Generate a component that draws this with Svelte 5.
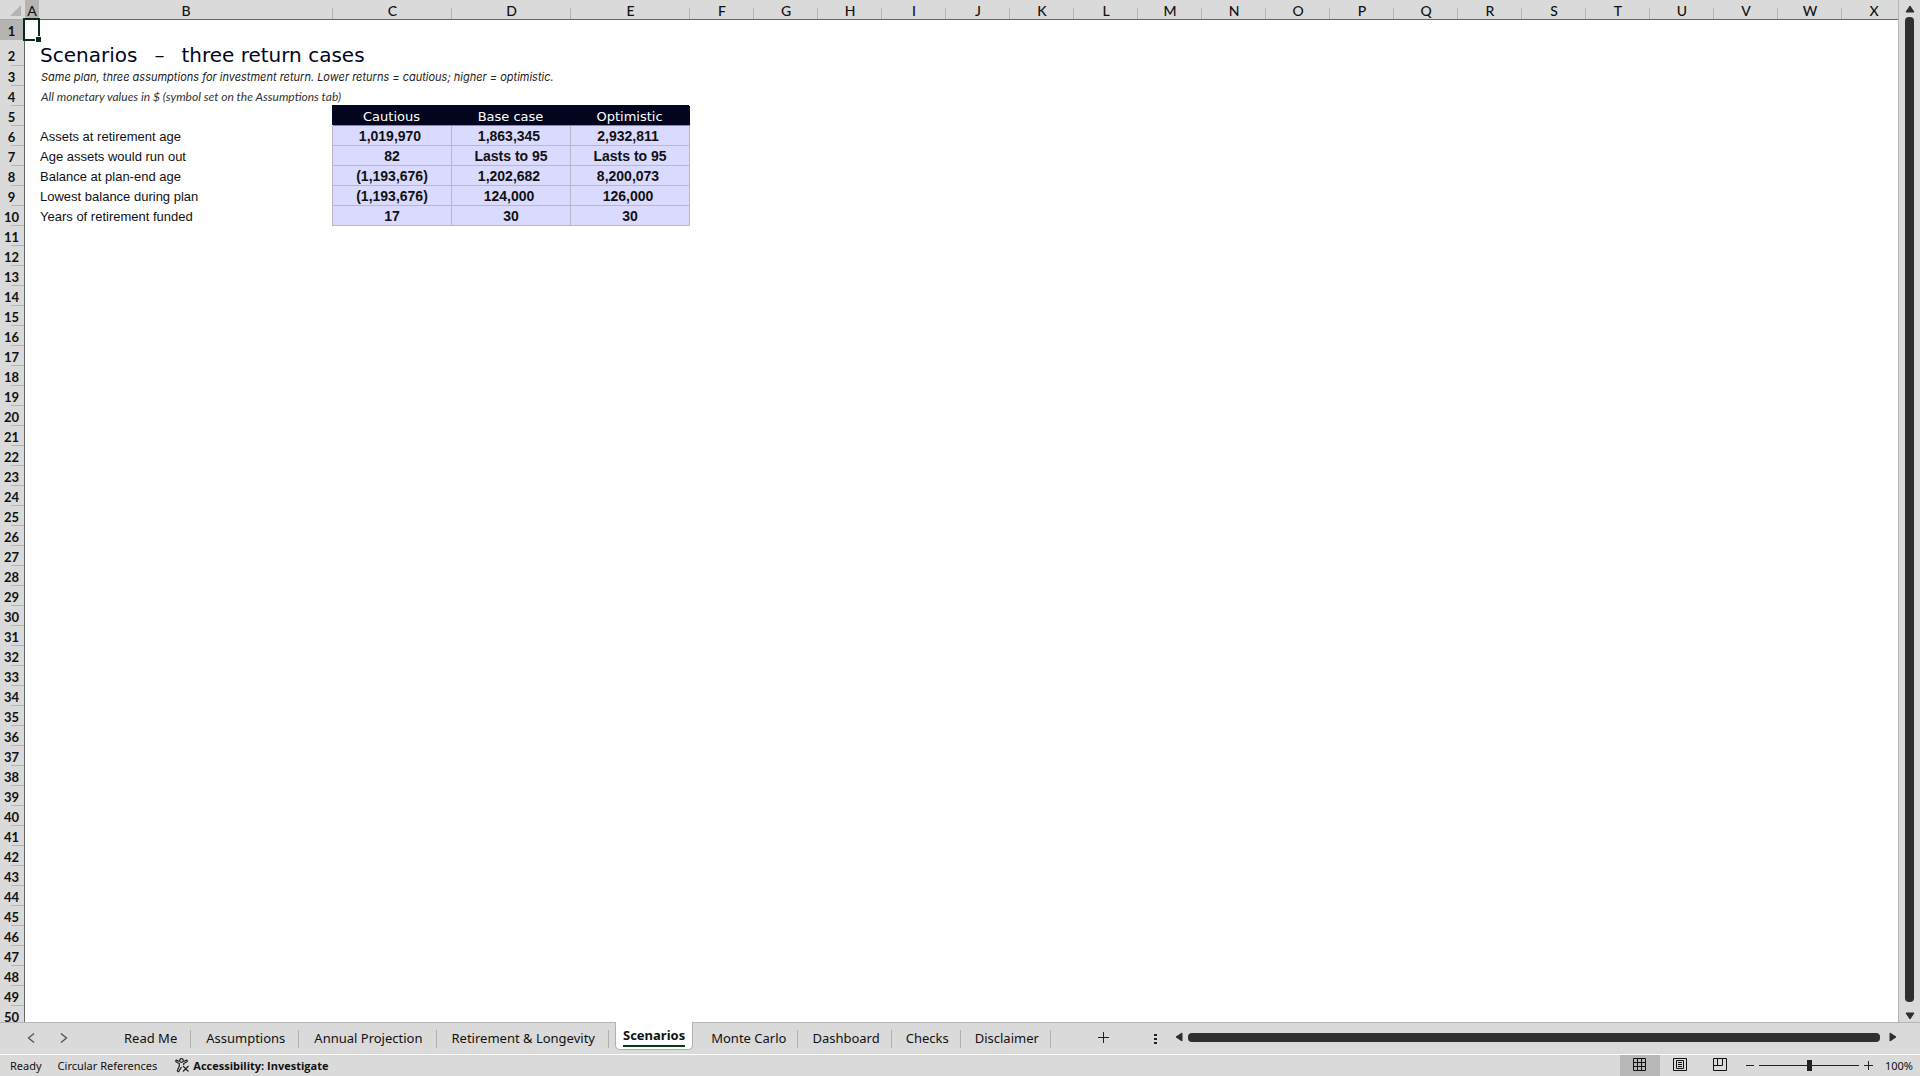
<script>
  const columns = 'ABCDEFGHIJKLMNOPQRSTUVWX'.split('');
  const rest = Array.from({ length: 40 }, (_, i) => i + 11);
  const scenarios = ['Cautious', 'Base case', 'Optimistic'];
  const results = [
    { label: 'Assets at retirement age', values: ['1,019,970', '1,863,345', '2,932,811'] },
    { label: 'Age assets would run out', values: ['82', 'Lasts to 95', 'Lasts to 95'] },
    { label: 'Balance at plan-end age', values: ['(1,193,676)', '1,202,682', '8,200,073'] },
    { label: 'Lowest balance during plan', values: ['(1,193,676)', '124,000', '126,000'] },
    { label: 'Years of retirement funded', values: ['17', '30', '30'] }
  ];
  const tabs = ['Read Me', 'Assumptions', 'Annual Projection', 'Retirement & Longevity', 'Scenarios', 'Monte Carlo', 'Dashboard', 'Checks', 'Disclaimer'];
  let active = $state('Scenarios');
  let zoom = $state(100);
  // Positive amounts keep room for a closing bracket on their right.
  const isAmount = (v) => v.includes(',') && !v.startsWith('(');
</script>

<div class="app">
  <div class="work">
    <div class="sheet">
      <table>
        <colgroup>
          <col class="w-head" /><col class="w-a" /><col class="w-b" />
          <col class="w-c" /><col class="w-c" /><col class="w-c" />
          {#each columns.slice(5) as c (c)}<col class="w-std" />{/each}
        </colgroup>
        <thead>
          <tr>
            <td class="corner"><svg width="24" height="19" aria-hidden="true"><path d="M21 5v11H10z" fill="#b4b4b4" /></svg></td>
            {#each columns as c (c)}<th scope="col" class:picked={c === 'A'}>{c}</th>{/each}
          </tr>
        </thead>
        <tbody>
          <tr><th scope="row" class="picked">1</th><td class="cursor"><span class="box"></span></td></tr>
          <tr class="tall"><th scope="row">2</th><td></td><td class="title">Scenarios<span class="dash">–</span>three return cases</td></tr>
          <tr><th scope="row">3</th><td></td><td class="note">Same plan, three assumptions for investment return. Lower returns = cautious; higher = optimistic.</td></tr>
          <tr><th scope="row">4</th><td></td><td class="note money">All monetary values in $ (symbol set on the Assumptions tab)</td></tr>
          <tr><th scope="row">5</th><td></td><td></td>{#each scenarios as s (s)}<td class="case">{s}</td>{/each}</tr>
          {#each results as r, i (r.label)}
            <tr>
              <th scope="row">{i + 6}</th><td></td><td class="label">{r.label}</td>
              {#each r.values as v, j (j)}<td class="value" class:amount={isAmount(v)}>{v}</td>{/each}
            </tr>
          {/each}
          {#each rest as n (n)}<tr><th scope="row">{n}</th><td></td></tr>{/each}
        </tbody>
      </table>
    </div>
    <div class="vbar">
      <button aria-label="Scroll up"><svg width="10" height="8"><path d="M5 1L9 7H1z" fill="#2f2f2f" stroke="#2f2f2f" stroke-linejoin="round" /></svg></button>
      <div class="thumb"></div>
      <button aria-label="Scroll down"><svg width="10" height="8"><path d="M5 7L9 1H1z" fill="#2f2f2f" stroke="#2f2f2f" stroke-linejoin="round" /></svg></button>
    </div>
  </div>

  <div class="tabbar">
    <div class="arrows">
      <button aria-label="Previous sheet"><svg width="8" height="10"><path d="M7 0.500L1.500 5L7 9.500" fill="none" stroke="#505050" stroke-width="1.300" /></svg></button>
      <button aria-label="Next sheet"><svg width="8" height="10"><path d="M1 0.500L6.500 5L1 9.500" fill="none" stroke="#505050" stroke-width="1.300" /></svg></button>
    </div>
    <nav class="tabs" aria-label="Sheets">
      {#each tabs as t (t)}
        <button class="tab" class:active={t === active} onclick={() => (active = t)}><span>{t}</span></button>
      {/each}
    </nav>
    <button class="add" aria-label="New sheet"><svg width="12" height="12"><path d="M5.500 0v11M0 5.500h11" stroke="#222" /></svg></button>
    <div class="grip"><svg width="4" height="12"><path d="M0 1h3M0 5h3M0 9h3" stroke="#222" stroke-width="2" /></svg></div>
    <div class="hbar">
      <button aria-label="Scroll left"><svg width="8" height="10"><path d="M1 5L7 1v8z" fill="#2f2f2f" stroke="#2f2f2f" stroke-linejoin="round" /></svg></button>
      <div class="thumb"></div>
      <button aria-label="Scroll right"><svg width="8" height="10"><path d="M7 5L1 1v8z" fill="#2f2f2f" stroke="#2f2f2f" stroke-linejoin="round" /></svg></button>
    </div>
  </div>

  <footer class="status">
    <span class="ready">Ready</span>
    <span class="circ">Circular References</span>
    <button class="access">
      <svg width="15" height="15" viewBox="0 0 15 15" fill="none" stroke="#222" stroke-width="1.200"><circle cx="6.500" cy="2.500" r="1.800" /><path d="M4.500 3.500L1.500 2.200Q0.300 2.500 1 3.700L4.300 5.500V8L2.300 12.500Q2.500 14 3.700 13.500L6.500 9M8.500 3.500L11.500 2.200Q12.800 2.500 12 3.700L8.700 5.500V7M8 8l5.500 5.500M13.500 8L8 13.500" /></svg>
      <b>Accessibility: Investigate</b>
    </button>
    <div class="views">
      <button class="on" aria-label="Normal view"><svg width="14" height="14" fill="none" stroke="#111"><path d="M.5 .5h12v12H.5zM.5 4.500h12M.5 8.500h12M4.500 .5v12M8.500 .5v12" /></svg></button>
      <button aria-label="Page layout view"><svg width="14" height="14" fill="none" stroke="#111"><path d="M.5 .5h13v12H.5zM3.500 2.500h7v8h-7zM5 4.500h4M5 6.500h4M5 8.500h4" /></svg></button>
      <button aria-label="Page break preview"><svg width="14" height="14" fill="none" stroke="#111"><path d="M.5 .5h13v12H.5zM4.500 .5v7M9.500 .5v7M.5 7.500h9" /></svg></button>
    </div>
    <button class="step" aria-label="Zoom out" onclick={() => (zoom -= 10)}><svg width="8" height="9"><path d="M0 4.500h8" stroke="#222" /></svg></button>
    <input type="range" min="0" max="200" bind:value={zoom} aria-label="Zoom" />
    <button class="step" aria-label="Zoom in" onclick={() => (zoom += 10)}><svg width="9" height="9"><path d="M0 4.500h9M4.500 0v9" stroke="#222" /></svg></button>
    <span class="pct">{zoom}%</span>
  </footer>
</div>

<style>
  :global(body) { margin: 0; }
  .app {
    height: 100vh; display: flex; flex-direction: column; overflow: hidden;
    background: #dadada; color: #111;
    font: 11px/16px 'Noto Sans', 'Open Sans', sans-serif;
  }
  button { border: 0; padding: 0; background: none; font: inherit; color: inherit; display: flex; align-items: center; justify-content: center; }
  svg { display: block; }
  .work { flex: 1; min-height: 0; display: flex; }
  .sheet { flex: 1; min-width: 0; overflow: hidden; background: #fff; border-right: 1px solid #b4b4b4; }
  table { table-layout: fixed; width: 1906px; border-collapse: separate; border-spacing: 0; }
  .w-head { width: 25px; }
  .w-a { width: 14px; }
  .w-b { width: 294px; }
  .w-c { width: 119px; }
  .w-std { width: 64px; }
  tr { height: 20px; }
  .tall { height: 26px; }
  th, td { padding: 0; box-sizing: border-box; white-space: nowrap; line-height: 18px; }
  thead th, .corner { height: 20px; border-bottom: 1px solid #666; background: #dadada; }
  th { font: 14px/17px Lato, sans-serif; color: #111; }
  thead th { padding-top: 2px; background: linear-gradient(#b4b4b4, #b4b4b4) right bottom / 1px 11px no-repeat #dadada; font-weight: 500; }
  tbody th { height: 20px; padding: 2px 1px 0 0; font-size: 13px; font-weight: 700; border-right: 1px solid #666; background: linear-gradient(#b4b4b4, #b4b4b4) right bottom / 13px 1px no-repeat #dadada; }
  .tall th { height: 26px; padding-top: 7px; }
  thead th.picked, tbody th.picked { background: #b4b4b4; }
  .corner { border-bottom-color: #aaa; }
  .cursor { position: relative; }
  .box { position: absolute; inset: -2px -1px -1px -2px; border: 2px solid #0b2b12; }
  .box::after { content: ''; position: absolute; right: -3px; bottom: -3px; width: 5px; height: 5px; background: #0b2b12; border: solid #fff; border-width: 1px 0 0 1px; }
  .title { padding: 3px 0 0 1px; font: 20px/22px 'DejaVu Sans', sans-serif; color: #03051e; }
  .dash { margin: 0 17px; }
  .note { padding: 2px 0 0 2px; font: italic 11px/18px Inter, sans-serif; color: #222; }
  .money { font: italic 12px/18px Lato, sans-serif; color: #333; }
  .label { padding: 2px 0 0 1px; font: 13px/18px 'Liberation Sans', sans-serif; }
  .case { background: #03051e; color: #fff; text-align: center; padding: 2px 2px 0 0; border-bottom: 1px solid #8a8aa8; box-shadow: -1px -1px #03051e; font: 13px/17px 'DejaVu Sans', sans-serif; }
  .value { text-align: center; padding-top: 1px; font: bold 14px/18px 'Liberation Sans', sans-serif; background: #dadaff; border: solid #b8b8c8; border-width: 0 1px 1px 0; }
  .value:nth-child(4) { box-shadow: -1px 0 #b8b8c8; }
  .amount { padding-right: 4px; }
  .vbar { width: 21px; display: flex; flex-direction: column; align-items: center; padding: 5px 0 2px; box-sizing: border-box; }
  .vbar .thumb { flex: 1; width: 9px; margin: 4px 0 10px; }
  .thumb { background: #2f2f2f; border-radius: 4px; }
  .tabbar { height: 33px; box-sizing: border-box; display: flex; align-items: flex-start; border-top: 1px solid #b4b4b4; border-bottom: 1px solid #fff; }
  .arrows { display: flex; gap: 25px; padding: 10px 0 0 27px; width: 82px; }
  .tabs { display: flex; }
  .tab { height: 30px; padding: 0 14px 0 15px; font-size: 13px; line-height: 20px; background: linear-gradient(#b0b0b0, #b0b0b0) right 7px / 1px 18px no-repeat; }
  .active ~ .tab { padding: 0 12px 0 14px; }
  .tab.active { height: 28px; margin: -1px 4px 0 6px; padding: 0 7px; font-weight: 700; background: #fff; border: 1px solid #b0b0b0; border-top: 0; border-radius: 0 0 5px 5px; }
  .active span { border-bottom: 2px solid #0b3b16; }
  .add { margin: 9px 0 0 47px; }
  .grip { margin: 11px 0 0 44px; }
  .hbar { flex: 1; display: flex; align-items: center; margin: 9px 23px 0 17px; gap: 5px; }
  .hbar .thumb { flex: 1; height: 9px; margin-right: 4px; }
  .status { height: 21px; display: flex; align-items: center; }
  .ready { margin-left: 10px; }
  .circ { margin-left: 16px; }
  .access { margin-left: 18px; gap: 3px; }
  .access b { font-family: 'Open Sans', sans-serif; font-weight: 700; }
  .views { display: flex; margin-left: auto; align-self: stretch; }
  .views button { width: 40px; padding-bottom: 2px; }
  .views .on { background: #b8b8b8; }
  .step { width: 19px; }
  input { appearance: none; width: 100px; height: 16px; margin: 0; background: linear-gradient(#222, #222) center / 100% 1px no-repeat; }
  input::-webkit-slider-thumb { appearance: none; width: 5px; height: 11px; background: #222; }
  .pct { width: 42px; text-align: center; }
</style>
